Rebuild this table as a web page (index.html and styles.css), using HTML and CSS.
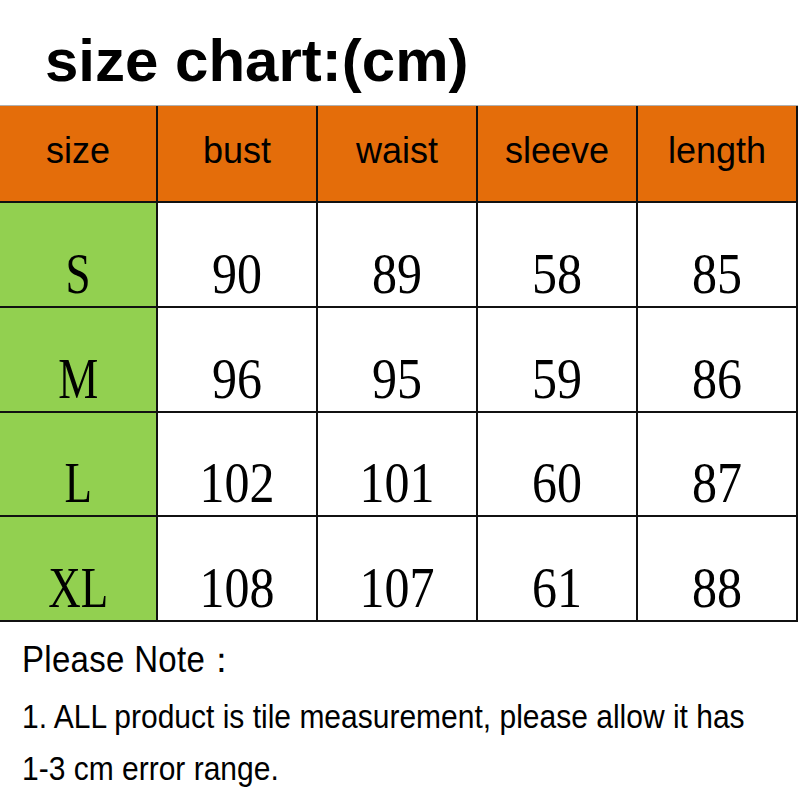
FILE: index.html
```html
<!DOCTYPE html>
<html>
<head>
<meta charset="utf-8">
<link rel="stylesheet" href="styles.css">
</head>
<body>
<div class="page">
  <h1 class="title">size chart:(cm)</h1>
  <div class="chart">
    <div class="cell head">size</div>
    <div class="cell head">bust</div>
    <div class="cell head">waist</div>
    <div class="cell head">sleeve</div>
    <div class="cell head">length</div>

    <div class="cell size"><span class="num">S</span></div>
    <div class="cell val"><span class="num">90</span></div>
    <div class="cell val"><span class="num">89</span></div>
    <div class="cell val"><span class="num">58</span></div>
    <div class="cell val"><span class="num">85</span></div>

    <div class="cell size"><span class="num">M</span></div>
    <div class="cell val"><span class="num">96</span></div>
    <div class="cell val"><span class="num">95</span></div>
    <div class="cell val"><span class="num">59</span></div>
    <div class="cell val"><span class="num">86</span></div>

    <div class="cell size"><span class="num">L</span></div>
    <div class="cell val"><span class="num">102</span></div>
    <div class="cell val"><span class="num">101</span></div>
    <div class="cell val"><span class="num">60</span></div>
    <div class="cell val"><span class="num">87</span></div>

    <div class="cell size"><span class="num">XL</span></div>
    <div class="cell val"><span class="num">108</span></div>
    <div class="cell val"><span class="num">107</span></div>
    <div class="cell val"><span class="num">61</span></div>
    <div class="cell val"><span class="num">88</span></div>
  </div>
  <div class="notes">
    <p class="note-title"><span class="tall">Please Note：</span></p>
    <p class="note-line"><span class="tall">1. ALL product is tile measurement, please allow it has</span></p>
    <p class="note-line"><span class="tall">1-3 cm error range.</span></p>
  </div>
</div>
</body>
</html>
```

FILE: styles.css
```css
* { box-sizing: border-box; }
html, body { margin: 0; padding: 0; background: #fff; }
.page {
  width: 800px;
  height: 800px;
  overflow: hidden;
  font-family: "Liberation Sans", Arial, sans-serif;
  color: #000;
}
.title {
  margin: 0;
  height: 105px;
  padding: 26px 0 0 45px;
  font-size: 60px;
  font-weight: bold;
  line-height: normal;
}
.chart {
  display: grid;
  grid-template-columns: 156px 158px 158px 158px 158px;
  grid-template-rows: 95px 103px 103px 102px 103px;
  gap: 2px;
  width: 798px;
  padding: 0 2px 2px 0;
  background: #111;
  border-top: 1px solid #b0b0b0;
}
.cell {
  display: flex;
  justify-content: center;
  background: #fff;
}
.head {
  align-items: center;
  padding-bottom: 6px;
  background: #e46d0a;
  font-size: 36px;
}
.size { background: #92d050; }
.size, .val {
  align-items: flex-end;
  padding-bottom: 5px;
}
.num {
  display: inline-block;
  font-family: "Liberation Serif", "Times New Roman", serif;
  font-size: 50px;
  line-height: 1;
  transform: scaleY(1.15);
  transform-origin: 50% 84%;
}
.size .num { transform: scale(0.9, 1.15); }
.notes {
  padding: 19px 0 0 22px;
}
.tall {
  display: inline-block;
  transform: scaleY(1.1);
  transform-origin: 0 80%;
}
.note-title {
  margin: 0 0 12px;
  font-size: 33px;
  line-height: 40px;
  letter-spacing: 0.3px;
}
.note-line {
  margin: 0;
  font-size: 30px;
  line-height: 52px;
}
```
